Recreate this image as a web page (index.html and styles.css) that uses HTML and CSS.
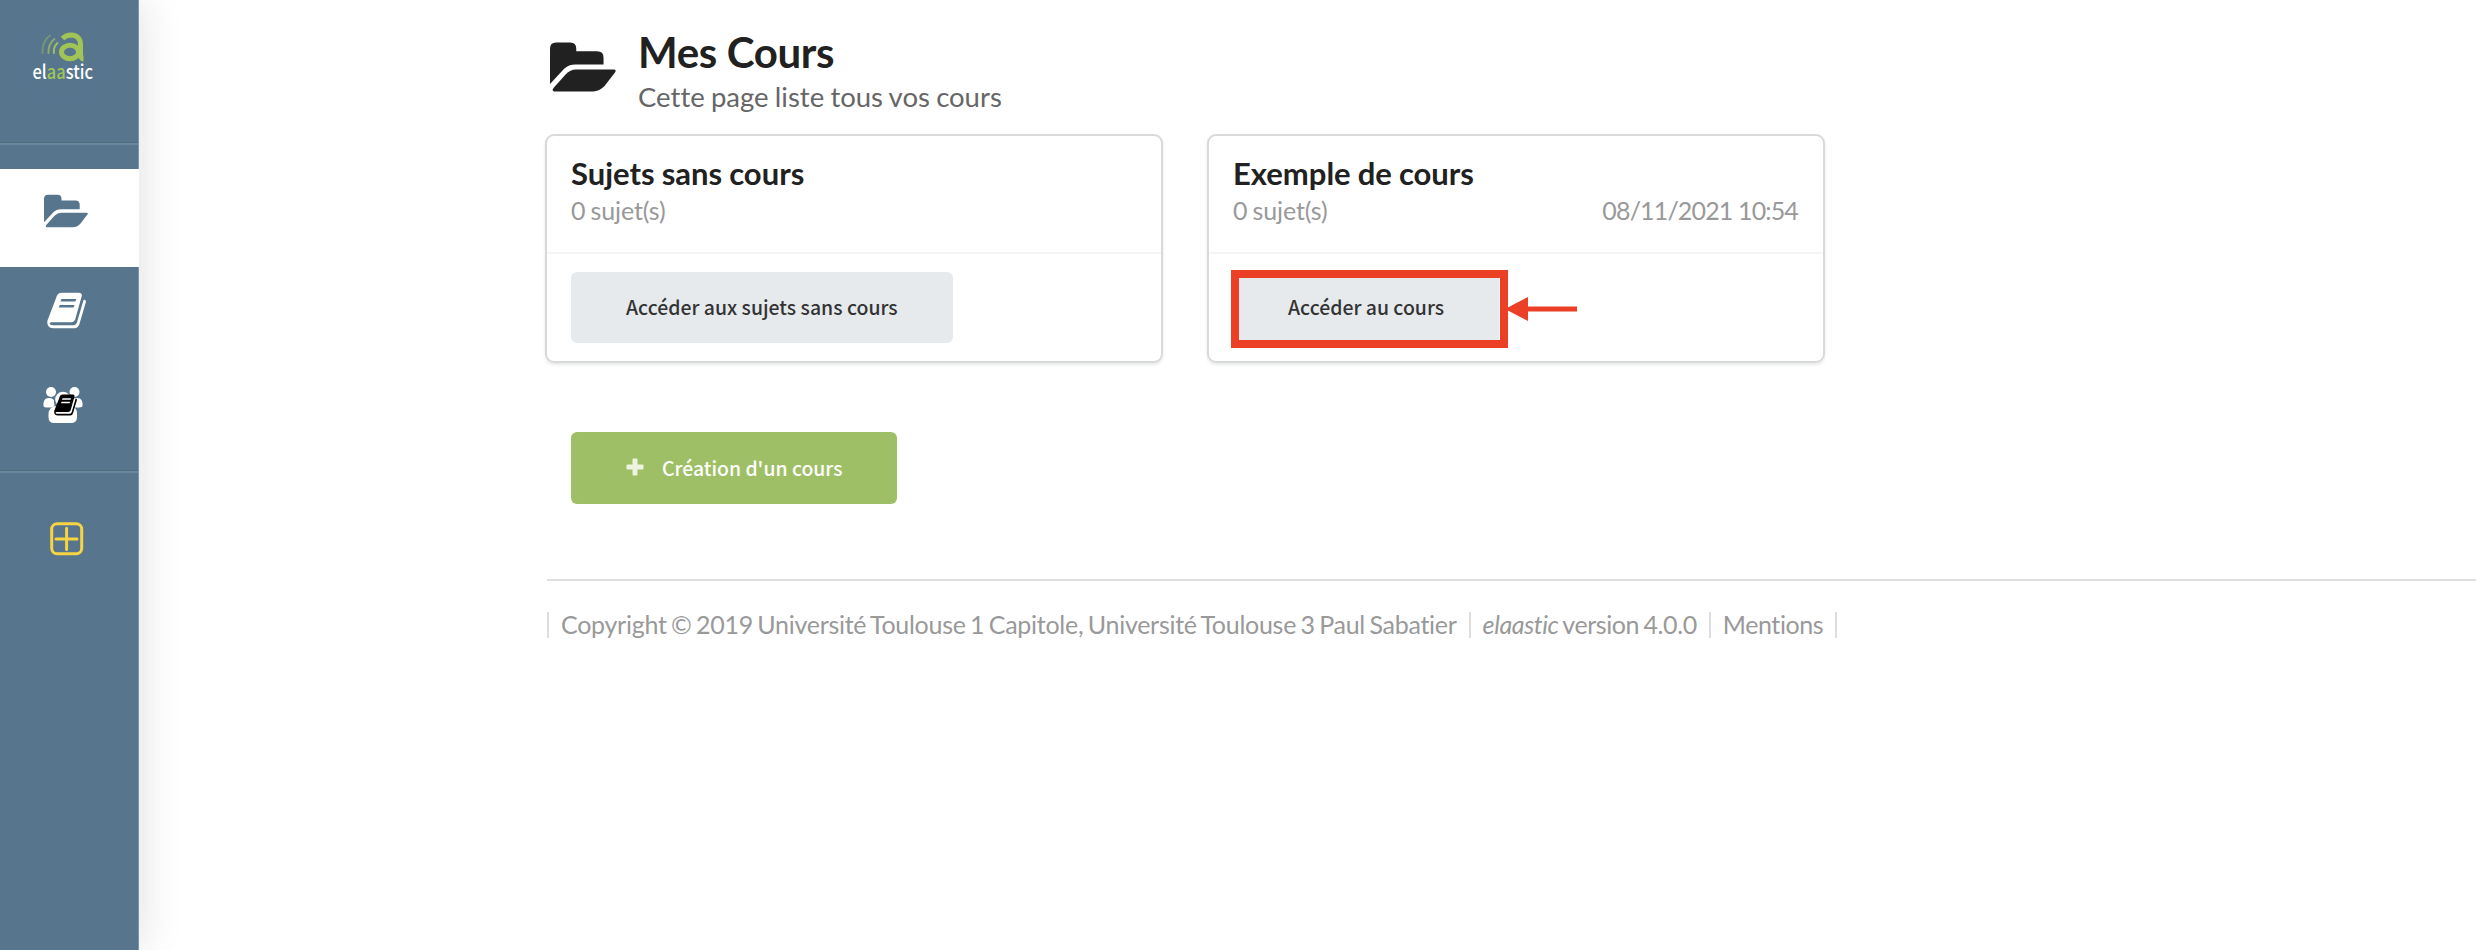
FILE: index.html
```html
<!DOCTYPE html>
<html lang="fr">
<head>
<meta charset="utf-8">
<title>elaastic - Mes Cours</title>
<link rel="stylesheet" href="styles.css">
</head>
<body>
<svg width="0" height="0" class="defs">
  <symbol id="folder-open" viewBox="0 0 196 147"><path d="M0 124V19Q0 1 18 1H60Q78 1 78 19V27H140Q159 27 159 46V66H76Q55 66 42 79Z"/><path d="M11 135L47 95Q60 81 77 81H191Q197 82 194 88L162 130Q147 146 128 146H12Q4 144 11 135Z"/></symbol>
  <symbol id="book" viewBox="0 0 116 108"><path fill-rule="evenodd" d="M45 1H96Q106 2 103 12L84 80Q81 89 72 89H13Q6 90 9 95Q12 98 18 98H78Q86 98 89 90L108 25Q109 21 113 22Q117 24 115 31L96 96Q92 107 82 107H20Q2 107 1 91Q0 84 4 77L27 17Q30 1 45 1ZM43 20L40 27H84L87 20ZM38 38L35 45H79L82 38Z"/></symbol>
</svg>
<div class="app">
  <nav class="sidebar">
    <div class="logo">
      <svg width="84" height="84" viewBox="22 19 84 84">
        <circle class="logo-ring" cx="63" cy="61" r="40.500"/>
        <path class="wave wave-far" d="M50 35.500Q42 41 42.500 53"/>
        <path class="wave wave-mid" d="M54.500 39Q48 44 48.500 53"/>
        <path class="wave" d="M57.500 43Q53 47 54 53"/>
        <path class="mark" d="M62.500 38.500Q66 35 71 35Q80.500 35.500 80.500 45V53Q80.500 59 83.500 59"/>
        <ellipse class="mark" cx="70" cy="52" rx="8.500" ry="6.800"/>
        <text class="logo-name" x="32.500" y="79" textLength="60.500" lengthAdjust="spacingAndGlyphs">el<tspan class="logo-aa">aa</tspan>stic</text>
      </svg>
    </div>
    <div class="item active"><svg class="i-folder"><use href="#folder-open"/></svg></div>
    <div class="item"><svg class="i-book"><use href="#book"/></svg></div>
    <div class="item item-group">
      <svg width="40" height="38" viewBox="0 0 40 38">
        <circle cx="8" cy="6" r="5"/><circle cx="31.500" cy="6" r="5"/>
        <path d="M0.500 20Q0 12 5.500 12Q12 12 11 17Q13 21 8 21.500Q1 22 .5 20ZM39.500 20Q40 12 34.500 12Q28 12 28 17Q27 21 31 21.500Q39 22 39.500 20Z"/>
        <circle cx="20" cy="13.500" r="7.800"/>
        <path d="M5.500 28Q6 20 14 20H26Q34 20 34 28V31Q34 37 28 37H11Q5.500 37 5.500 31Z"/>
        <svg class="dark" x="11" y="8" width="23" height="22"><use href="#book"/></svg>
      </svg>
    </div>
    <div class="add">
      <svg width="34" height="34" viewBox="0 0 34 34"><rect x="1.700" y="1.700" width="30" height="30" rx="5.500"/><path d="M16.600 6.200V27.600M6 17H27"/></svg>
    </div>
  </nav>
  <main class="main">
    <header class="head">
      <svg class="head-icon"><use href="#folder-open"/></svg>
      <div>
        <h1>Mes Cours</h1>
        <p class="sub">Cette page liste tous vos cours</p>
      </div>
    </header>
    <section class="cards">
      <article class="card">
        <div class="card-top">
          <h2>Sujets sans cours</h2>
          <div class="meta"><span>0 sujet(s)</span></div>
        </div>
        <div class="card-foot"><a class="btn">Accéder aux sujets sans cours</a></div>
      </article>
      <article class="card">
        <div class="card-top">
          <h2>Exemple de cours</h2>
          <div class="meta"><span>0 sujet(s)</span><span class="date">08/11/2021 10:54</span></div>
        </div>
        <div class="card-foot"><a class="btn btn-marked">Accéder au cours<span class="frame"></span><svg class="arrow" width="72" height="24" viewBox="0 0 72 24"><path d="M0 12L23 0V9.500H72V14.500H23V24Z"/></svg></a></div>
      </article>
    </section>
    <a class="btn create"><svg width="18" height="18" viewBox="0 0 18 18"><path d="M7.300 .5H10.700Q11.500 .5 11.500 1.500V6.500H16.500Q17.500 6.500 17.500 7.500V10.500Q17.500 11.500 16.500 11.500H11.500V16.500Q11.500 17.500 10.700 17.500H7.300Q6.500 17.500 6.500 16.500V11.500H1.500Q.5 11.500 .5 10.500V7.500Q.5 6.500 1.500 6.500H6.500V1.500Q6.500 .5 7.300 .5Z"/></svg><span>Création d'un cours</span></a>
    <footer class="foot">
      <span class="f1">Copyright © 2019 Université Toulouse 1 Capitole, Université Toulouse 3 Paul Sabatier</span>
      <span class="f2"><em>elaastic</em> version 4.0.0</span>
      <span class="f3">Mentions</span>
    </footer>
  </main>
</div>
</body>
</html>
```
FILE: styles.css
```css
* { box-sizing: border-box; }
body { margin: 0; background: #fff; font-family: Lato, sans-serif; color: #212121; font-variant-ligatures: none; }
h1, h2, p { margin: 0; font-weight: 700; }
.defs { display: block; position: absolute; }
.app { display: flex; height: 950px; overflow: hidden; }

.sidebar { width: 139px; flex: none; background: #57758d; border-right: 1px solid #7e94a7; box-shadow: 0 0 40px rgba(34, 36, 38, .15); display: flex; flex-direction: column; fill: #fff; }
.sidebar svg { display: block; }
.logo { height: 145px; padding: 19px 0 0 22px; border-bottom: 2px solid #6b869b; box-shadow: inset 0 -1px #4f6d82; margin-bottom: 24px; flex: none; }
.logo-ring { fill: none; stroke: #537896; stroke-dasharray: 5 3; stroke-width: .8; }
.wave { fill: none; stroke: #9ebe60; stroke-width: 2; stroke-linecap: round; }
.wave-far { opacity: .45; }
.wave-mid { opacity: .75; }
.mark { fill: none; stroke: #a0c456; stroke-width: 5; }
.logo-name { font: 500 19px "Noto Sans CJK SC", sans-serif; fill: #fff; }
.logo-aa { fill: #a0c456; }
.item { height: 97px; width: 138px; flex: none; padding-top: 23px; }
.active { background: #fff; width: 139px; height: 98px; padding: 25px 0 0 44px; fill: #57758d; }
.i-folder { width: 44px; height: 34px; }
.active + .item { padding: 25px 0 0 47px; }
.i-book { width: 39px; height: 37px; }
.item-group { padding: 22px 0 0 43px; height: 109px; border-bottom: 2px solid #6b869b; box-shadow: inset 0 -1px #4f6d82; }
.dark { fill: #000; }
.add { padding: 49px 0 0 50px; }
.add svg { fill: none; stroke: #f8d442; stroke-width: 3; stroke-linecap: round; }

.main { flex: 1; padding: 28px 0 0 407px; }
.head { display: flex; height: 106px; padding-left: 4px; }
.head-icon { width: 66px; height: 50px; margin: 14px 22px 0 0; fill: #212121; flex: none; }
.head h1 { font-size: 42px; line-height: 49px; letter-spacing: -.35px; word-spacing: 0; }
.sub { font-size: 27.500px; line-height: 40px; font-weight: 400; color: #666; word-spacing: -.800px; }
.cards { display: flex; gap: 44px; margin-left: -1px; }
.card { width: 618px; height: 229px; border: 2px solid #d8d9d9; border-radius: 9px; box-shadow: 0 2px 3px rgba(34, 36, 38, .1); }
.card-top { height: 118px; padding: 19px 24px 0; border-bottom: 2px solid #f4f4f4; }
.card h2 { font-size: 31px; line-height: 37px; word-spacing: -.500px; }
.meta { display: flex; justify-content: space-between; font-size: 25px; line-height: 37px; color: #999; letter-spacing: -.15px; word-spacing: -1px; }
.date { letter-spacing: -.850px; word-spacing: 0; padding-right: 1px; }
.card-foot { padding: 18px 24px 0; display: flex; }
.btn { display: flex; align-items: center; height: 71px; padding: 0 55px 2px; border-radius: 6px; background: #e6eaed; color: #333; font: 500 19.450px "Noto Sans CJK SC", sans-serif; white-space: nowrap; }
.btn-marked { position: relative; }
.frame { position: absolute; left: -2px; top: -2px; width: 277px; height: 78px; border: 8px solid #eb4026; }
.arrow { position: absolute; left: 272px; top: 25px; fill: #eb4026; }
.create { width: 326px; height: 72px; padding-bottom: 2px; margin: 69px 0 0 25px; background: #9ebf65; color: #fff; font-size: 19.400px; }
.create svg { fill: #edf3e1; margin-right: 18px; flex: none; }
.foot { margin: 75px 0 0 1px; border-top: 2px solid #dfe0e0; padding-top: 31px; display: flex; font-size: 25px; line-height: 26px; color: #999; white-space: nowrap; letter-spacing: -.27px; word-spacing: -1.700px; }
.foot span { border-right: 2px solid #dedede; padding: 0 12px; line-height: 25px; height: 26px; }
.foot .f1 { border-left: 2px solid #dedede; }
.foot .f2 { letter-spacing: -.4px; }
.foot .f3 { letter-spacing: -.4px; }
```
